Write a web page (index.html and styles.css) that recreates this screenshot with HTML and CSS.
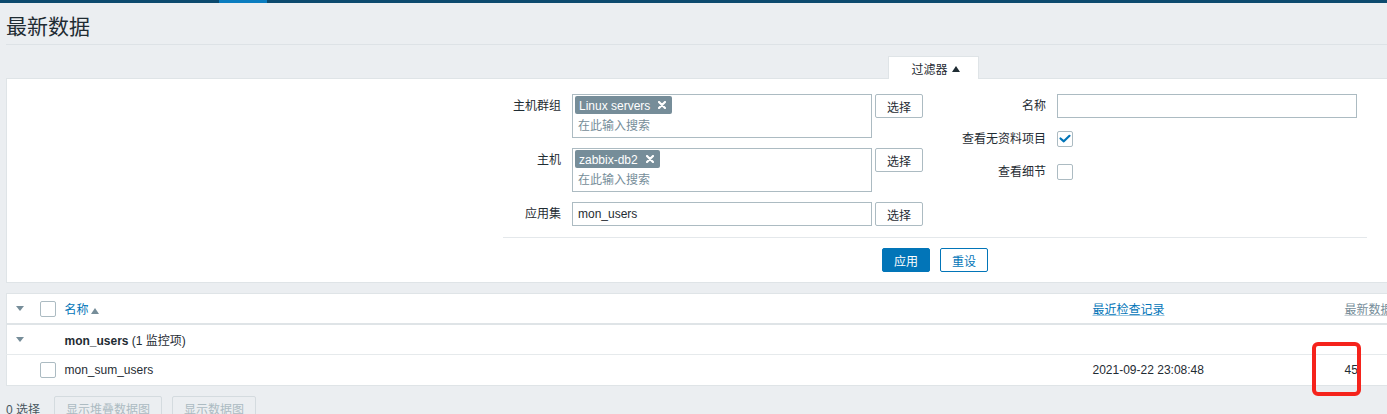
FILE: index.html
```html
<!DOCTYPE html>
<html lang="zh-CN">
<head>
<meta charset="utf-8">
<title>最新数据</title>
<link rel="stylesheet" href="styles.css">
</head>
<body>
<div class="topbar"><span class="topbar-active"></span></div>
<div class="page">
  <header class="page-header"><h1 class="page-title">最新数据</h1></header>

  <section class="filter">
    <div class="filter-tabs">
      <span class="filter-tab">过滤器 <svg class="tab-arrow" width="8" height="6" viewBox="0 0 8 6"><polygon points="0,6 8,6 4,0" fill="#1f2c33"/></svg></span>
    </div>
    <div class="filter-panel">
      <div class="filter-form">
        <div class="filter-cols">
          <div class="form-col form-col-left">
            <div class="form-row">
              <label class="form-label">主机群组</label>
              <div class="multiselect">
                <div class="ms-tags"><span class="tag">Linux servers<svg class="tag-x" width="8" height="8" viewBox="0 0 8 8"><path d="M1 1L7 7M7 1L1 7" stroke="#fff" stroke-width="2.2" stroke-linecap="round"/></svg></span></div>
                <div class="ms-input">在此输入搜索</div>
              </div>
              <button class="btn-alt">选择</button>
            </div>
            <div class="form-row">
              <label class="form-label">主机</label>
              <div class="multiselect">
                <div class="ms-tags"><span class="tag">zabbix-db2<svg class="tag-x" width="8" height="8" viewBox="0 0 8 8"><path d="M1 1L7 7M7 1L1 7" stroke="#fff" stroke-width="2.2" stroke-linecap="round"/></svg></span></div>
                <div class="ms-input">在此输入搜索</div>
              </div>
              <button class="btn-alt">选择</button>
            </div>
            <div class="form-row">
              <label class="form-label">应用集</label>
              <div class="text-input text-input-left">mon_users</div>
              <button class="btn-alt">选择</button>
            </div>
          </div>
          <div class="form-col form-col-right">
            <div class="form-row">
              <label class="form-label form-label-right">名称</label>
              <div class="text-input text-input-right"></div>
            </div>
            <div class="form-row form-row-check">
              <label class="form-label form-label-right">查看无资料项目</label>
              <span class="checkbox"><svg width="16" height="16" viewBox="0 0 16 16"><path d="M3.5 7.5L6.8 10.3L12.5 4.8" fill="none" stroke="#0275b8" stroke-width="2.2" stroke-linecap="round" stroke-linejoin="round"/></svg></span>
            </div>
            <div class="form-row form-row-check">
              <label class="form-label form-label-right">查看细节</label>
              <span class="checkbox"></span>
            </div>
          </div>
        </div>
        <div class="filter-actions">
          <button class="btn">应用</button>
          <button class="btn-outline">重设</button>
        </div>
      </div>
    </div>
  </section>

  <table class="list-table">
    <colgroup>
      <col class="col-toggle"><col class="col-check"><col class="col-name"><col class="col-time"><col class="col-value">
    </colgroup>
    <thead>
      <tr>
        <th><svg class="arrow-down" width="8" height="5" viewBox="0 0 8 5"><polygon points="0,0 8,0 4,5" fill="#768d99"/></svg></th>
        <th><span class="checkbox"></span></th>
        <th><a class="sort-link">名称</a><svg class="sort-arrow" width="8" height="6" viewBox="0 0 8 6"><polygon points="0,6 8,6 4,0" fill="#768d99"/></svg></th>
        <th><a class="sort-link sort-link-u">最近检查记录</a></th>
        <th><span class="col-muted">最新数据</span></th>
      </tr>
    </thead>
    <tbody>
      <tr class="group-row">
        <td><svg class="arrow-down" width="8" height="5" viewBox="0 0 8 5"><polygon points="0,0 8,0 4,5" fill="#768d99"/></svg></td>
        <td></td>
        <td colspan="3"><b>mon_users</b> (1 监控项)</td>
      </tr>
      <tr class="item-row">
        <td></td>
        <td><span class="checkbox"></span></td>
        <td>mon_sum_users</td>
        <td>2021-09-22 23:08:48</td>
        <td>45</td>
      </tr>
    </tbody>
  </table>

  <div class="action-bar">
    <span class="selected-count">0 选择</span>
    <button class="btn-disabled">显示堆叠数据图</button>
    <button class="btn-disabled">显示数据图</button>
  </div>
</div>
<div class="annotation"></div>
</body>
</html>
```
FILE: styles.css
```css
html, body {
  margin: 0;
  padding: 0;
  overflow: hidden;
  width: 1387px;
  height: 414px;
}
body {
  background: #ebeef1;
  font-family: "Liberation Sans", "Noto Sans CJK SC", sans-serif;
  font-size: 12px;
  color: #1f2c33;
  position: relative;
}
button {
  font-family: inherit;
  font-size: 12px;
  box-sizing: border-box;
  height: 24px;
  padding: 0;
  border-radius: 2px;
  cursor: pointer;
}

.topbar {
  display: flex;
  height: 3px;
  background: #0c4a6e;
}
.topbar-active {
  width: 48px;
  margin-left: 219px;
  background: #0b7dc0;
}

.page {
  padding-left: 6px;
  width: 1500px;
}
.page-header {
  border-bottom: 1px solid #dde2e6;
  padding: 14px 0 7px;
}
.page-title {
  margin: 0;
  font-size: 21px;
  line-height: 20px;
  font-weight: normal;
  color: #1f2c33;
}

.filter {
  margin-top: 11px;
}
.filter-tabs {
  display: flex;
  padding-left: 882px;
}
.filter-tab {
  position: relative;
  z-index: 1;
  box-sizing: border-box;
  width: 91px;
  height: 23px;
  margin-bottom: -1px;
  border: 1px solid #dfe4e7;
  border-bottom: none;
  background: #fff;
  display: flex;
  align-items: center;
  justify-content: center;
  gap: 4px;
  padding-top: 1px;
  padding-left: 4px;
}
.tab-arrow {
  display: block;
}
.filter-panel {
  background: #fff;
  border: 1px solid #dfe4e7;
  padding: 15px 0 10px 496px;
}
.filter-form {
  width: 864px;
}
.filter-cols {
  display: flex;
}
.form-col {
  display: flex;
  flex-direction: column;
}
.form-col-left {
  width: 420px;
  gap: 10px;
}
.form-col-right {
  gap: 9px;
}
.form-row {
  display: flex;
  align-items: flex-start;
}
.form-row-check {
  align-items: center;
  height: 24px;
}
.form-label {
  width: 58px;
  margin-right: 11px;
  text-align: right;
  line-height: 24px;
  white-space: nowrap;
}
.form-label-right {
  width: 123px;
}
.multiselect {
  box-sizing: border-box;
  width: 300px;
  height: 44px;
  border: 1px solid #acbbc2;
  background: #fff;
  padding: 1px 2px;
}
.ms-tags {
  display: flex;
}
.tag {
  display: inline-flex;
  align-items: center;
  height: 18px;
  padding: 1px 6px 0 4px;
  box-sizing: border-box;
  border-radius: 2px;
  background: #768d99;
  color: #fff;
  gap: 8px;
}
.tag-x {
  display: block;
  margin-top: -1px;
}
.ms-input {
  padding-left: 3px;
  line-height: 24px;
  color: #768d99;
}
.text-input {
  box-sizing: border-box;
  height: 24px;
  border: 1px solid #acbbc2;
  background: #fff;
  padding: 0 5px;
  line-height: 22px;
}
.text-input-left {
  width: 300px;
}
.text-input-right {
  width: 300px;
}
.btn-alt {
  margin-left: 3px;
  width: 48px;
  background: #fff;
  border: 1px solid #acbbc2;
  color: #1f2c33;
}
.checkbox {
  display: inline-block;
  box-sizing: border-box;
  width: 16px;
  height: 16px;
  border: 1px solid #acbbc2;
  border-radius: 2px;
  background: #fff;
  vertical-align: middle;
  overflow: hidden;
}
.checkbox svg {
  display: block;
  margin: -1px 0 0 -1px;
}
.filter-actions {
  margin-top: 11px;
  padding-top: 10px;
  border-top: 1px solid #e4e8eb;
  display: flex;
  justify-content: center;
  gap: 10px;
}
.btn {
  width: 48px;
  background: #0275b8;
  border: 1px solid #0275b8;
  color: #fff;
}
.btn-outline {
  width: 48px;
  background: #fff;
  border: 1px solid #0275b8;
  color: #0275b8;
}

.list-table {
  margin-top: 10px;
  width: 1500px;
  table-layout: fixed;
  border-collapse: collapse;
  background: #fff;
  border: 1px solid #dfe4e7;
}
.col-toggle { width: 28px; }
.col-check { width: 25px; }
.col-name { width: 1028px; }
.col-time { width: 252px; }
.col-value { width: auto; }
.list-table th,
.list-table td {
  padding: 0 5px;
  text-align: left;
  font-weight: normal;
  vertical-align: middle;
  white-space: nowrap;
}
.list-table th {
  height: 29px;
  border-bottom: 2px solid #dfe4e7;
}
.list-table th:first-child,
.list-table td:first-child {
  padding-left: 9px;
}
.arrow-down {
  display: block;
}
.sort-link {
  color: #0275b8;
  text-decoration: none;
}
.sort-link-u {
  text-decoration: underline;
  text-decoration-color: rgba(2, 117, 184, 0.4);
  text-underline-offset: 1px;
}
.sort-arrow {
  margin-left: 2px;
  vertical-align: 0;
}
.col-muted {
  color: #768d99;
  text-decoration: underline;
  text-decoration-color: rgba(118, 141, 153, 0.4);
  text-underline-offset: 1px;
}
.group-row td {
  height: 29px;
  border-bottom: 1px solid #e6eaec;
}
.group-row b {
  font-weight: bold;
}
.item-row td {
  height: 30px;
}

.action-bar {
  margin-top: 10px;
  display: flex;
  align-items: center;
  height: 24px;
}
.selected-count {
  color: #48565f;
  margin-right: 14px;
}
.btn-disabled {
  padding: 0 11px;
  margin-right: 10px;
  background: transparent;
  border: 1px solid #d4dbdf;
  color: #acbbc2;
}

.annotation {
  position: absolute;
  left: 1312px;
  top: 342px;
  width: 49px;
  height: 54px;
  box-sizing: border-box;
  border: 4px solid #f5231c;
  border-radius: 6px;
}
```
